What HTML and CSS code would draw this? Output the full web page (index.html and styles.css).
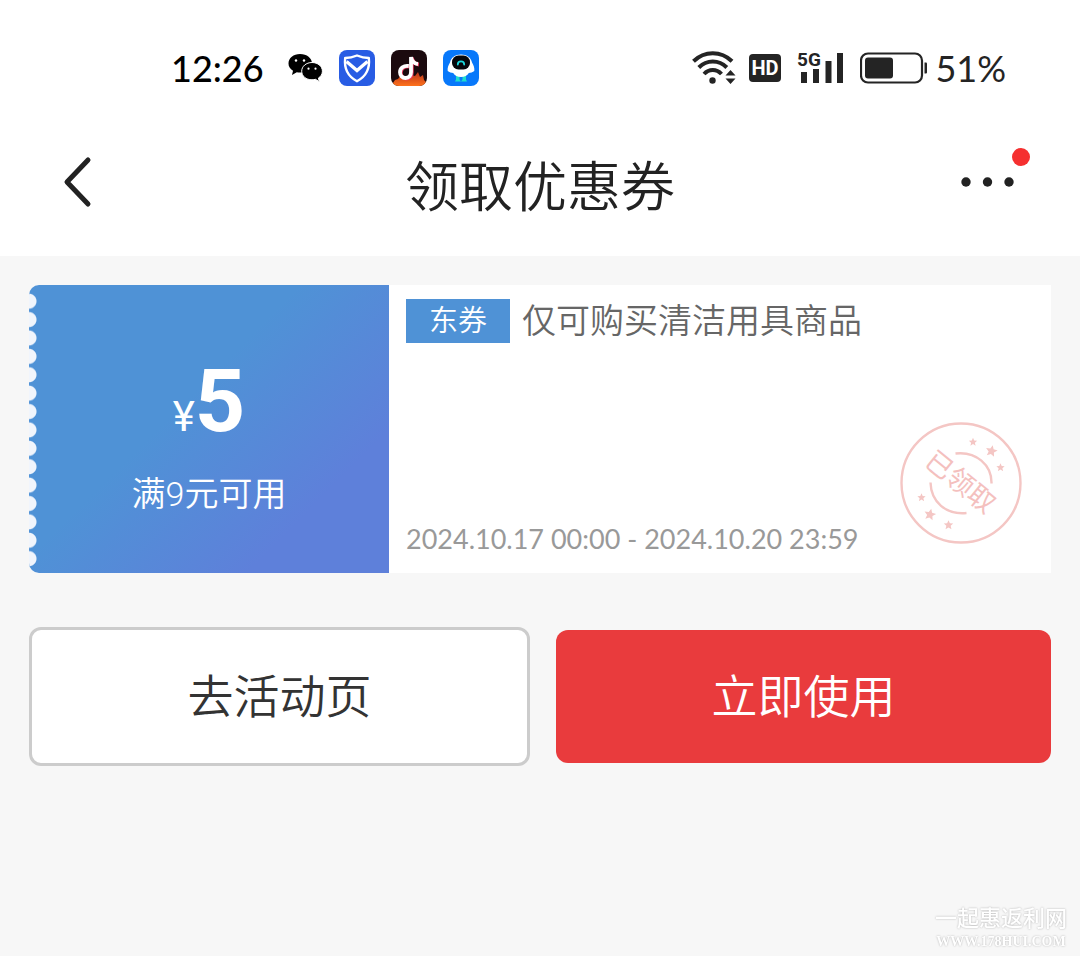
FILE: index.html
```html
<!DOCTYPE html>
<html lang="zh-CN">
<head>
  <meta charset="UTF-8">
  <meta name="viewport" content="width=device-width, initial-scale=1.0">
  <title>领取优惠券</title>
  <link rel="stylesheet" href="styles.css">
</head>
<body>
  <header class="top">
    <div class="status">
      <div class="status-left">
        <span class="time">12:26</span>
        <svg class="wechat" width="35" height="36" viewBox="0 0 35 36" aria-hidden="true">
          <path d="M12 4C5.500 4 .5 8 .5 13.500c0 3 1.500 5.500 4.500 7.200L4 25l4.800-2.800c1 .3 2 .4 3.200.4 7 0 12-4 12-9.200S19 4 12 4z"/>
          <path d="M24 12.500c-5.800 0-10.300 3.800-10.300 8.700S18 29.800 24 29.800c1.200 0 2.300-.2 3.400-.5l4 2.400-1-3.600c2.500-1.600 4-4 4-6.900 0-4.900-4.600-8.700-10.400-8.700z" stroke="#fff"/>
          <g fill="#fff"><circle cx="8" cy="10.500" r="1.200"/><circle cx="16" cy="10.500" r="1.200"/><circle cx="20.500" cy="18.700" r="1.100"/><circle cx="27.500" cy="18.700" r="1.100"/></g>
        </svg>
        <svg width="36" height="36" viewBox="0 0 36 36" aria-hidden="true">
          <rect width="36" height="36" rx="8" fill="#285ce4"/>
          <path d="M18 5.500c3.500 1.500 7.500 2.500 11.800 2.500C31 18 27 26.500 18 31.200 9 26.500 5 18 6.200 8c4.300 0 8.300-1 11.800-2.500z" fill="none" stroke="#fff" stroke-width="2.400" stroke-linejoin="round"/>
          <path d="M7.500 11.500L18 20.500l10.500-9" fill="none" stroke="#fff" stroke-width="3.400"/>
        </svg>
        <svg width="36" height="36" viewBox="0 0 36 36" aria-hidden="true">
          <defs>
            <clipPath id="tile"><rect width="36" height="36" rx="8"/></clipPath>
            <linearGradient id="fire" x1="0" y1="0" x2="0" y2="1"><stop offset="0" stop-color="#b8321b"/><stop offset="1" stop-color="#ff721c"/></linearGradient>
          </defs>
          <g clip-path="url(#tile)">
            <rect width="36" height="36" fill="#1b0a0e"/>
            <path d="M0 36l4-6 3-1 3-4 4 2 6-2 4 1 3-4 2 5 3-2 1 5 3 3v3z" fill="url(#fire)"/>
          </g>
          <path d="M17.700 16c-5-.7-8.700 2-8.700 6.200C9 25.700 11.300 28 14.500 28c3.600 0 5.500-2.500 5.500-6V7c.8 4.500 3 6.500 7 7" fill="none" stroke="#f13c62" stroke-width="3.600" transform="translate(.9 .6)"/>
          <path d="M17.700 16c-5-.7-8.700 2-8.700 6.200C9 25.700 11.300 28 14.500 28c3.600 0 5.500-2.500 5.500-6V7c.8 4.500 3 6.500 7 7" fill="none" stroke="#fff" stroke-width="3.800"/>
        </svg>
        <svg width="36" height="36" viewBox="0 0 36 36" aria-hidden="true">
          <rect width="36" height="36" rx="8" fill="#0878fa"/>
          <path d="M13 25h3.500v4.500l1.500 2h-6l1-2zM19.500 25H23v4.500l1 2h-6l1.500-2z" fill="#20ddcd"/>
          <path d="M18 4.500c-6 0-10 3-11 8-1.500 2.500-2.800 5.500-2.300 8.500 1.500 1.200 3.800 2 5.500 2 1.500 2.800 4.300 4 7.800 4s6.300-1.200 7.800-4c1.700 0 4-.8 5.500-2 .5-3-.8-6-2.300-8.500-1-5-5-8-11-8z" fill="#fff"/>
          <rect x="9" y="5.500" width="18" height="14" rx="6.500" fill="#06070b"/>
          <path d="M14.800 14.500a3.200 3.200 0 0 1 6.400 0" fill="none" stroke="#1bd7dc" stroke-width="1.800" stroke-linecap="round"/>
        </svg>
      </div>
      <div class="status-right">
        <svg class="wifi" width="44" height="36" viewBox="0 0 44 36" aria-hidden="true">
          <g fill="none" stroke="#242424" stroke-width="4">
            <path d="M1.500 11.200c11-10.700 27.500-10.700 38.500 0"/>
            <path d="M6.800 17.500c8-8 20-8 28 0"/>
            <path d="M12 24c5-5.300 12.500-5.300 17.500 0"/>
          </g>
          <circle cx="20.500" cy="30.500" r="3.200" fill="#242424"/>
          <path d="M38.500 20l5 5.500h-10zM38.500 34l5-5.500h-10z" fill="#242424"/>
        </svg>
        <svg width="32" height="28" viewBox="0 0 32 28" role="img" aria-label="HD">
          <rect width="32" height="28" rx="4" fill="#242424"/>
          <text class="hd" x="16" y="21" text-anchor="middle">HD</text>
        </svg>
        <svg width="47" height="44" viewBox="0 -4 47 44" role="img" aria-label="5G">
          <text class="net" x="0" y="16">5G</text>
          <path d="M4 22h6v11H4zM16 19h6v14h-6zM28.500 11h6v22h-6zM40 3h6v30h-6z" fill="#242424"/>
        </svg>
        <svg width="67" height="32" viewBox="0 0 67 32" aria-hidden="true">
          <rect x="1" y="1.500" width="61" height="29" rx="7" fill="none" stroke="#242424" stroke-width="2.200"/>
          <rect x="5" y="5.500" width="28" height="21" rx="3" fill="#242424"/>
          <path d="M64.500 10.500h1.500q1 0 1 1v9q0 1-1 1h-1.500z" fill="#242424"/>
        </svg>
        <span class="percent">51%</span>
      </div>
    </div>
    <nav class="nav">
      <button class="icon-btn" type="button" aria-label="返回">
        <svg width="34" height="52" viewBox="0 0 34 52"><path d="M28 4L7 26l21 22" fill="none" stroke="#222" stroke-width="5" stroke-linecap="round" stroke-linejoin="round"/></svg>
      </button>
      <h1 class="title">领取优惠券</h1>
      <button class="icon-btn more" type="button" aria-label="更多">
        <svg width="56" height="12" viewBox="0 0 56 12" fill="#222"><circle cx="6" cy="6" r="4.700"/><circle cx="27.500" cy="6" r="4.700"/><circle cx="49" cy="6" r="4.700"/></svg>
        <span class="badge"></span>
      </button>
    </nav>
  </header>

  <main class="content">
    <section class="coupon">
      <div class="coupon-price">
        <div class="price"><span class="yen">¥</span>5</div>
        <div class="limit">满9元可用</div>
      </div>
      <div class="coupon-info">
        <div class="coupon-name"><span class="tag">东券</span><span>仅可购买清洁用具商品</span></div>
        <div class="coupon-bottom">
          <time class="date">2024.10.17 00:00 - 2024.10.20 23:59</time>
          <svg class="stamp" width="122" height="122" viewBox="0 0 122 122" role="img" aria-label="已领取">
            <defs><path id="star" d="M0-6l1.700 3.900 4.200.3-3.200 2.800 1 4.200L0 3l-3.700 2.200 1-4.200-3.200-2.800 4.200-.3z"/></defs>
            <g fill="none" stroke="#f4c6c4">
              <circle cx="61" cy="61" r="59.500" stroke-width="2.400"/>
              <path d="M55.500 31.500C76 29 92 43 91.500 61.500M30.500 60.500C31 80 46 93 66.500 91" stroke-width="2.400"/>
            </g>
            <g fill="#f4c6c4">
              <use href="#star" transform="translate(91.500 29) rotate(12)"/>
              <use href="#star" transform="translate(73 20) scale(.7)"/>
              <use href="#star" transform="translate(100.500 45.500) scale(.7)"/>
              <use href="#star" transform="translate(30 92.500) rotate(12)"/>
              <use href="#star" transform="translate(21.500 75.500) scale(.7)"/>
              <use href="#star" transform="translate(48.500 103) scale(.8)"/>
            </g>
            <text class="stamp-text" x="60" y="70" text-anchor="middle" transform="rotate(39 61 61)">已领取</text>
          </svg>
        </div>
      </div>
    </section>

    <div class="actions">
      <button class="btn btn-plain" type="button">去活动页</button>
      <button class="btn btn-red" type="button">立即使用</button>
    </div>
  </main>

  <div class="watermark">
    <div class="mark-name">一起惠返利网</div>
    <div class="mark-url">WWW.178HUI.COM</div>
  </div>
</body>
</html>
```

FILE: styles.css
```css
* {
  box-sizing: border-box;
}
body {
  margin: 0;
  background-color: #f7f7f7;
  color: #333;
  font-family: Roboto, "Noto Sans CJK SC", sans-serif;
  font-weight: 350;
}
svg {
  display: block;
}
button {
  padding: 0;
  border: none;
  background: none;
  font: inherit;
  color: inherit;
  cursor: pointer;
}

/* status bar and title */
.top {
  background-color: #fff;
  height: 256px;
}
.status {
  display: flex;
  justify-content: space-between;
  padding: 48px 74px 0 171px;
}
.status-left,
.status-right {
  display: flex;
  align-items: center;
  gap: 16px;
  height: 40px;
}
.time,
.percent {
  font-family: Lato, sans-serif;
  font-size: 36px;
  font-weight: 500;
  line-height: 40px;
  color: #000;
}
.wechat {
  margin-left: 8px;
}
.wifi {
  margin-right: -3px;
}
.percent {
  font-weight: 400;
  color: #242424;
  margin-left: -8px;
}
.hd {
  font: bold 20px Roboto, sans-serif;
  fill: #fff;
}
.net {
  font: bold 19px Roboto, sans-serif;
  fill: #242424;
}
.nav {
  display: flex;
  align-items: center;
  justify-content: space-between;
  padding: 54px 60px 0 60px;
}
.icon-btn {
  display: flex;
  align-items: center;
  width: 60px;
  height: 80px;
}
.title {
  margin: 0;
  padding-top: 14px;
  font-size: 54px;
  font-weight: 350;
  line-height: 66px;
  color: #222;
}
.more {
  position: relative;
}
.badge {
  position: absolute;
  top: 6px;
  right: -10px;
  width: 18px;
  height: 18px;
  border-radius: 50%;
  background-color: #f53030;
}

/* coupon */
.content {
  padding: 29px;
}
.coupon {
  display: flex;
  min-height: 288px;
  background-color: #fff;
  border-radius: 10px 0 0 10px;
  overflow: hidden;
}
.coupon-price {
  position: relative;
  width: 360px;
  display: flex;
  flex-direction: column;
  align-items: center;
  padding-top: 72px;
  background-image: linear-gradient(135deg, #4f92d6 42%, #5e80da 78%);
  color: #fff;
}
.coupon-price::before {
  content: "";
  position: absolute;
  left: 0;
  top: 7px;
  bottom: 5px;
  width: 8px;
  background: radial-gradient(circle at 0 50%, #f1f5fc 7px, transparent 8px) 0 0 / 8px 18px round;
}
.price {
  font-size: 88px;
  font-weight: 700;
  line-height: 88px;
}
.yen {
  font-size: 42px;
  font-weight: 400;
}
.limit {
  margin-top: 8px;
  font-size: 34px;
  line-height: 50px;
}
.coupon-info {
  flex: 1;
  display: flex;
  flex-direction: column;
  justify-content: space-between;
  padding: 14px 29px 16px 17px;
}
.coupon-name {
  display: flex;
  align-items: center;
  gap: 12px;
  font-size: 34px;
  line-height: 44px;
  color: #666;
}
.tag {
  width: 104px;
  background-color: #4f92d6;
  color: #fff;
  font-size: 29px;
  text-align: center;
}
.coupon-bottom {
  display: flex;
  justify-content: space-between;
  align-items: flex-end;
}
.date {
  font-family: Lato, sans-serif;
  font-size: 27px;
  font-weight: 400;
  line-height: 36px;
  color: #999;
}
.stamp {
  margin-bottom: 13px;
}
.stamp-text {
  font: 400 27px "Noto Sans CJK SC", sans-serif;
  fill: #f4c0be;
}

/* buttons */
.actions {
  display: flex;
  align-items: center;
  gap: 26px;
  margin-top: 54px;
}
.btn {
  box-sizing: content-box;
  flex: 1;
  height: 125px;
  padding-bottom: 8px;
  border-radius: 12px;
  font-size: 46px;
}
.btn-plain {
  border: 3px solid #ccc;
  background-color: #fff;
}
.btn-red {
  background-color: #e93b3d;
  color: #fff;
}

.watermark {
  position: fixed;
  right: 13px;
  bottom: 4px;
  color: #fff;
  text-align: center;
  text-shadow: 0 0 2px #aaa;
}
.mark-name {
  font-size: 22px;
  font-weight: 500;
  line-height: 26px;
}
.mark-url {
  font-family: "Liberation Serif", serif;
  font-size: 14px;
  font-weight: 700;
  line-height: 20px;
}
```
